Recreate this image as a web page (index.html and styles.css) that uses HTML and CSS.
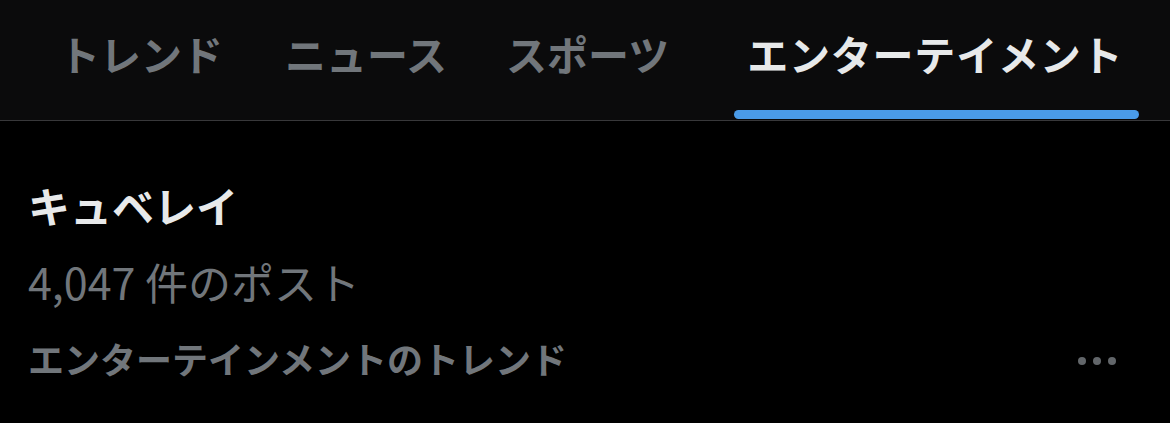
FILE: index.html
```html
<!DOCTYPE html>
<html lang="ja">
<head>
<meta charset="utf-8">
<link rel="stylesheet" href="styles.css">
</head>
<body>
<header class="tabs">
  <div class="tab">トレンド</div>
  <div class="tab tab-news">ニュース</div>
  <div class="tab tab-sports">スポーツ</div>
  <div class="tab tab-active">エンターテイメント</div>
</header>
<main class="trend">
  <div class="trend-text">
    <div class="trend-name">キュベレイ</div>
    <div class="trend-count">4,047 件のポスト</div>
    <div class="trend-cat">エンターテインメントのトレンド</div>
  </div>
  <div class="more"><span></span><span></span><span></span></div>
</main>
</body>
</html>
```
FILE: styles.css
```css
html, body {
  margin: 0;
  padding: 0;
  background: #000;
  font-family: "Noto Sans CJK JP", "Noto Sans", sans-serif;
}
.tabs {
  display: flex;
  align-items: stretch;
  height: 120px;
  background: #0b0b0c;
  border-bottom: 1px solid #38383a;
  padding-left: 46px;
  box-sizing: content-box;
}
.tab {
  display: flex;
  align-items: center;
  padding: 0 13px 15px;
  font-size: 41px;
  font-weight: 700;
  color: #71767b;
  box-sizing: border-box;
}
.tab-news { margin-left: 36px; }
.tab-sports { margin-left: 33px; }
.tab-active {
  margin-left: 52px;
  padding: 0 16px 15px 13px;
  letter-spacing: 0.8px;
  color: #e7e9ea;
  position: relative;
}
.tab-active::after {
  content: "";
  position: absolute;
  left: 0;
  right: 0;
  bottom: 1px;
  height: 9px;
  border-radius: 5px;
  background: #4a9be8;
}
.trend {
  display: flex;
  justify-content: space-between;
  align-items: flex-end;
  padding: 0 54px 0 28px;
}
.trend-name {
  margin-top: 56px;
  font-size: 42px;
  font-weight: 700;
  color: #e7e9ea;
  line-height: 56px;
}
.trend-count {
  margin-top: 20px;
  font-size: 43px;
  font-weight: 400;
  color: #71767b;
  line-height: 56px;
}
.trend-cat {
  margin-top: 25px;
  font-size: 36px;
  font-weight: 700;
  color: #71767b;
  line-height: 48px;
}
.more {
  display: flex;
  gap: 7px;
  padding-bottom: 17px;
}
.more span {
  width: 8px;
  height: 8px;
  border-radius: 50%;
  background: #62666a;
}
```
